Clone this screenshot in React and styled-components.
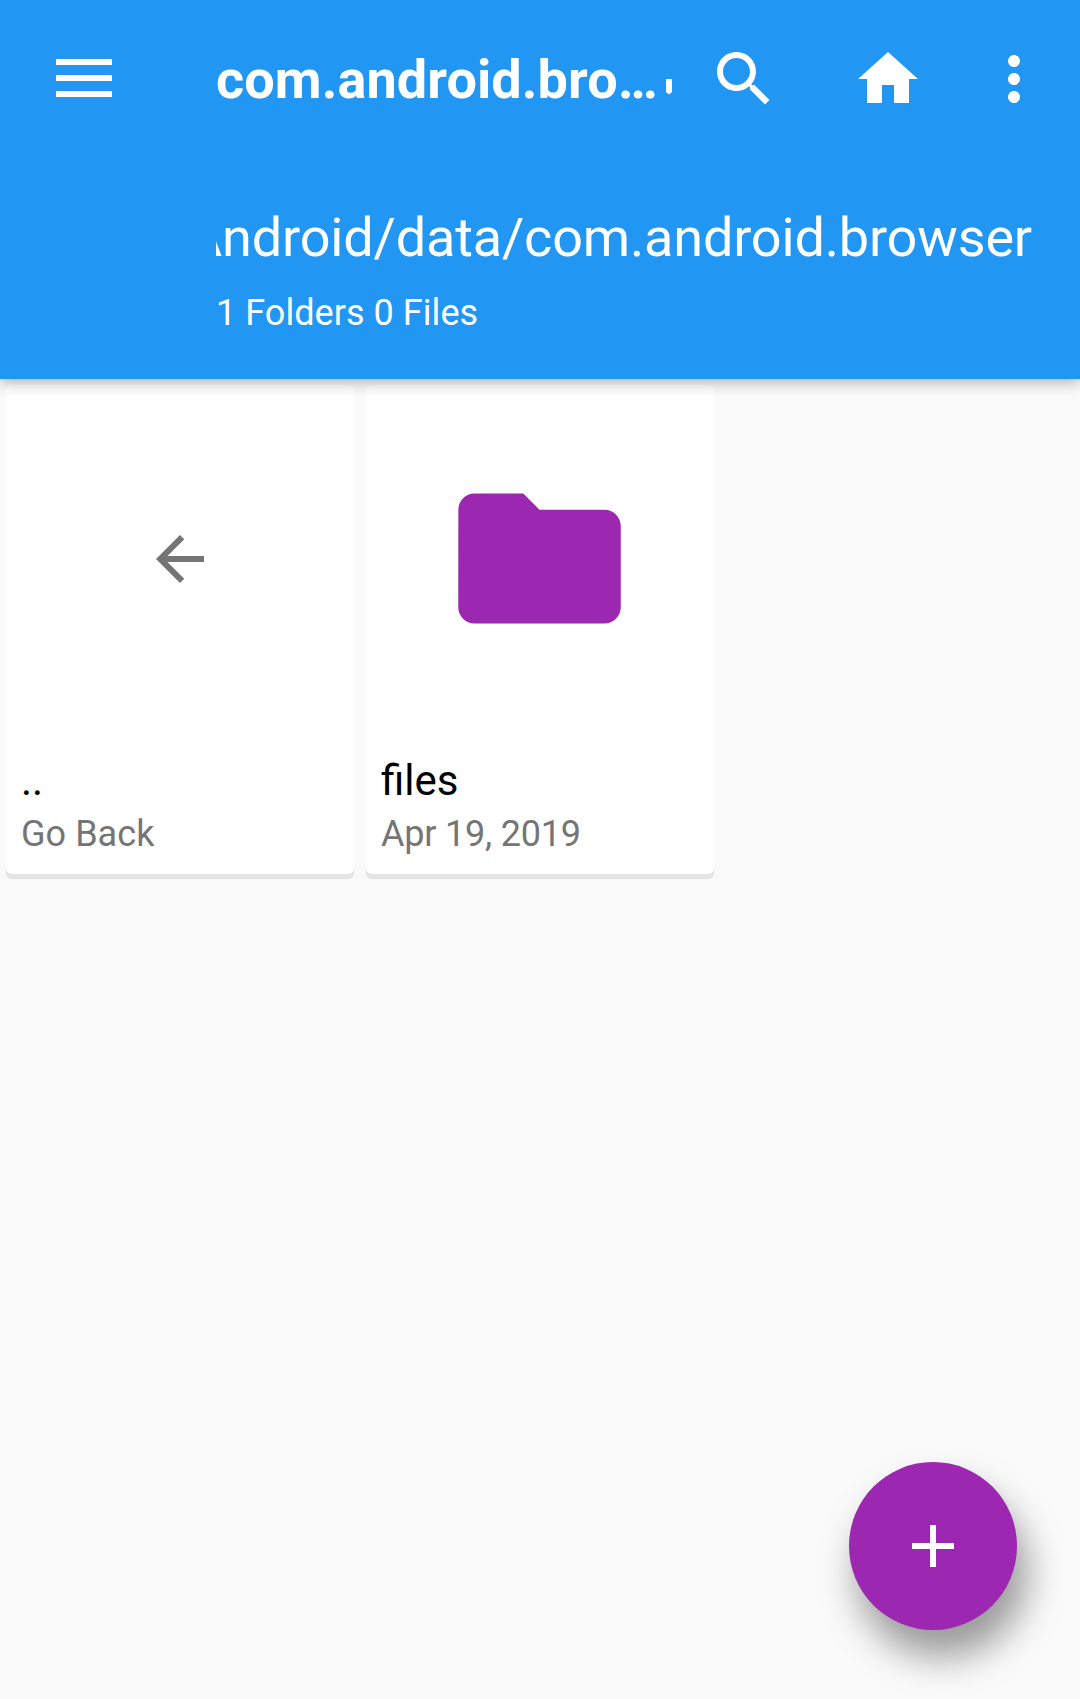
import React from "react";
import styled, { createGlobalStyle } from "styled-components";

const GlobalStyle = createGlobalStyle`
  * { box-sizing: border-box; }
  body { margin: 0; background: #fafafa; font-family: Roboto, sans-serif; }
`;

const Screen = styled.div`
  position: relative;
  width: 1080px;
  height: 1699px;
  background: #fafafa;
  overflow: hidden;
`;

const Header = styled.header`
  position: relative;
  z-index: 1;
  height: 379px;
  background: #2196f3;
  color: #fff;
  box-shadow: 0 4px 14px rgba(0, 0, 0, 0.27), 0 1px 4px rgba(0, 0, 0, 0.06);
`;

const Toolbar = styled.div`
  display: flex;
  align-items: center;
  height: 158px;
  padding: 0 30px 0 56px;
`;

const MenuButton = styled.div`
  display: flex;
  flex-direction: column;
  gap: 10px;
  width: 56px;
  margin: 0 104px 2px 0;
`;

const MenuBar = styled.span`
  height: 6px;
  background: #fff;
`;

const Title = styled.h1`
  flex: none;
  width: 450px;
  margin: 2px 0 0;
  font-size: 54px;
  line-height: 64px;
  font-weight: 700;
  letter-spacing: 0.1px;
  white-space: nowrap;
`;

const Marker = styled.svg`
  flex: none;
  width: 6px;
  height: 16px;
  margin: 15px 36px 0 0;
`;

const ActionIcon = styled.svg`
  flex: none;
  width: 72px;
  height: 72px;
  margin-right: ${(p) => p.$gap}px;
  fill: currentColor;
`;

const PathInfo = styled.div`
  display: flex;
  flex-direction: column;
  padding: 48px 48px 0 216px;
`;

const PathLine = styled.div`
  display: flex;
  justify-content: flex-end;
  overflow: hidden;
  font-size: 54px;
  line-height: 64px;
  letter-spacing: -0.16px;
  white-space: nowrap;
`;

const Summary = styled.div`
  margin-top: 22px;
  font-size: 36px;
  line-height: 42px;
  letter-spacing: 0.05px;
`;

const Grid = styled.main`
  display: grid;
  grid-template-columns: repeat(3, 348px);
  gap: 12px;
  padding: 6px 6px 0;
`;

const Card = styled.article`
  height: 489px;
  padding: 0 15px;
  background: #fff;
  border-radius: 6px;
  box-shadow: 0 5px 1px -0.5px #e4e4e4;
`;

const Thumb = styled.div`
  display: flex;
  align-items: center;
  justify-content: center;
  height: 348px;
`;

const ThumbIcon = styled.svg`
  width: ${(p) => p.$size}px;
  height: ${(p) => p.$size}px;
  margin: 0 ${(p) => p.$nudge}px ${(p) => p.$nudge}px 0;
  fill: ${(p) => p.$color};
`;

const Name = styled.div`
  font-size: 42px;
  line-height: 49px;
  color: #000;
  margin-top: 23px;
`;

const Detail = styled.div`
  font-size: 36px;
  line-height: 42px;
  letter-spacing: ${(p) => p.$tracking}px;
  color: #757575;
  margin-top: 8px;
`;

const Fab = styled.button`
  position: absolute;
  left: 849px;
  top: 1462px;
  display: flex;
  align-items: center;
  justify-content: center;
  width: 168px;
  height: 168px;
  padding: 0;
  border: 0;
  border-radius: 50%;
  background: #9c27b0;
  box-shadow: 9px 26px 37px 1px rgba(0, 0, 0, 0.39);
`;

const FabIcon = styled.svg`
  width: 72px;
  height: 72px;
  fill: #fff;
`;

const items = [
  {
    name: "..",
    detail: "Go Back",
    tracking: 0.05,
    size: 72,
    nudge: 0,
    color: "#757575",
    path: "M20 11H7.83l5.59-5.59L12 4l-8 8 8 8 1.41-1.41L7.83 13H20v-2z",
  },
  {
    name: "files",
    detail: "Apr 19, 2019",
    tracking: -0.2,
    size: 195,
    nudge: 1,
    color: "#9c27b0",
    path: "M10 4H4c-1.1 0-1.99.9-1.99 2L2 18c0 1.1.9 2 2 2h16c1.1 0 2-.9 2-2V8c0-1.1-.9-2-2-2h-8l-2-2z",
  },
];

const actions = [
  {
    id: "search",
    gap: 72,
    path: "M15.5 14h-.79l-.28-.27C15.41 12.59 16 11.11 16 9.5 16 5.91 13.09 3 9.5 3S3 5.91 3 9.5 5.91 16 9.5 16c1.61 0 3.09-.59 4.23-1.57l.27.28v.79l5 4.99L20.49 19l-4.99-5zm-6 0C7.01 14 5 11.99 5 9.5S7.01 5 9.5 5 14 7.01 14 9.5 11.99 14 9.5 14z",
  },
  { id: "home", gap: 54, path: "M10 20v-6h4v6h5v-8h3L12 3 2 12h3v8z" },
  {
    id: "more",
    gap: 0,
    path: "M12 8c1.1 0 2-.9 2-2s-.9-2-2-2-2 .9-2 2 .9 2 2 2zm0 2c-1.1 0-2 .9-2 2s.9 2 2 2 2-.9 2-2-.9-2-2-2zm0 6c-1.1 0-2 .9-2 2s.9 2 2 2 2-.9 2-2-.9-2-2-2z",
  },
];

export default function App() {
  return (
    <Screen>
      <GlobalStyle />
      <Header>
        <Toolbar>
          <MenuButton>
            <MenuBar />
            <MenuBar />
            <MenuBar />
          </MenuButton>
          <Title>com.android.bro…</Title>
          <Marker viewBox="0 0 6 16" fill="#fff">
            <path d="M0 0H6V13L3 15.5L0 13Z" />
          </Marker>
          {actions.map((a) => (
            <ActionIcon key={a.id} $gap={a.gap} viewBox="0 0 24 24">
              <path d={a.path} />
            </ActionIcon>
          ))}
        </Toolbar>
        <PathInfo>
          <PathLine>/Android/data/com.android.browser</PathLine>
          <Summary>1 Folders 0 Files</Summary>
        </PathInfo>
      </Header>
      <Grid>
        {items.map((item) => (
          <Card key={item.name}>
            <Thumb>
              <ThumbIcon
                $size={item.size}
                $nudge={item.nudge}
                $color={item.color}
                viewBox="0 0 24 24"
              >
                <path d={item.path} />
              </ThumbIcon>
            </Thumb>
            <Name>{item.name}</Name>
            <Detail $tracking={item.tracking}>{item.detail}</Detail>
          </Card>
        ))}
      </Grid>
      <Fab aria-label="Add">
        <FabIcon viewBox="0 0 24 24">
          <path d="M19 13h-6v6h-2v-6H5v-2h6V5h2v6h6v2z" />
        </FabIcon>
      </Fab>
    </Screen>
  );
}
